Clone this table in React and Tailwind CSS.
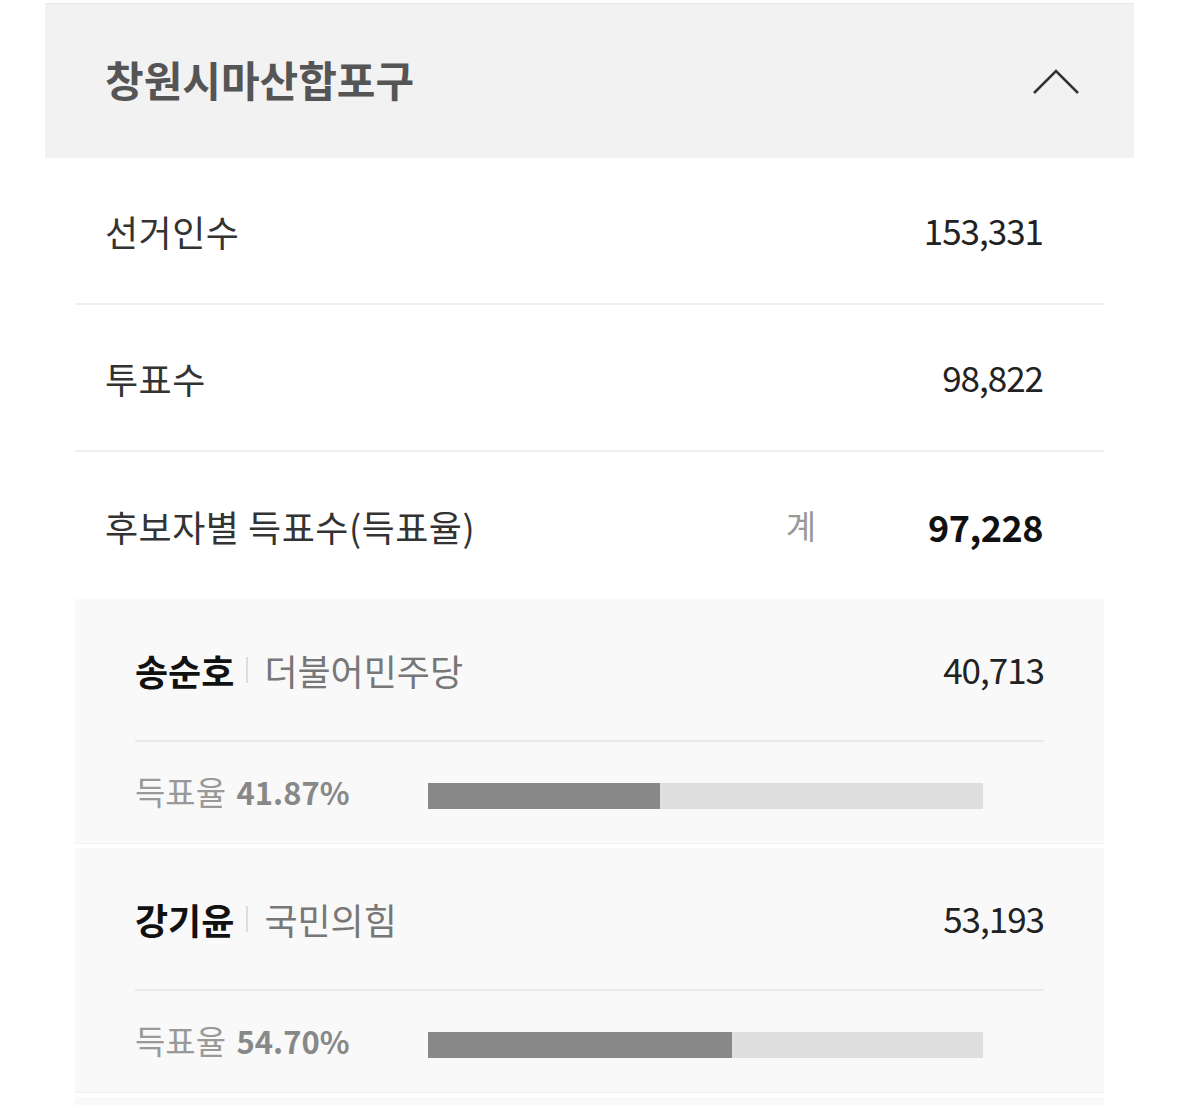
import React from 'react';

const font = { fontFamily: '"Noto Sans CJK KR", "Noto Sans", sans-serif' };

const candidates = [
    { name: '송순호', party: '더불어민주당', votes: '40,713', rate: 41.87 },
    { name: '강기윤', party: '국민의힘', votes: '53,193', rate: 54.7 },
];

const StatRow = ({ label, value }) => (
    <div className="flex items-center justify-between h-[147px] pl-[30px] pr-[61px] border-b-2 border-[#eeeeee]">
        <span className="text-[36px] tracking-[0.5px] text-[#333333]">{label}</span>
        <span className="text-[35px] tracking-[-1px] text-[#222222]">{value}</span>
    </div>
);

const CandidateCard = ({ candidate }) => (
    <div className="bg-[#f9f9f9] px-[60px] h-[245px] mb-[4px] border-b border-[#f1f1f1]">
        <div className="flex items-center justify-between h-[143px] border-b-2 border-[#eaeaea]">
            <div className="flex items-center">
                <span className="text-[36px] font-bold text-[#111111]">{candidate.name}</span>
                <span className="ml-[12px] mr-[16px] w-[2px] h-[26px] bg-[#dddddd]" />
                <span className="text-[36px] text-[#777777]">{candidate.party}</span>
            </div>
            <span className="text-[35px] tracking-[-1px] text-[#222222]">{candidate.votes}</span>
        </div>
        <div className="flex items-center h-[100px] pt-[8px]">
            <div className="w-[293px] mb-[8px] text-[33px] text-[#999999]">
                득표율 <span className="ml-[3px] text-[31px] font-bold text-[#888888]">{candidate.rate.toFixed(2)}%</span>
            </div>
            <div className="w-[555px] h-[26px] bg-[#dfdfdf]">
                <div className="h-full bg-[#888888]" style={{ width: `${candidate.rate}%` }} />
            </div>
        </div>
    </div>
);

export default function App() {
    return (
        <div className="bg-white min-h-screen pt-[3px] px-[45px]" style={font}>
            {/* District header */}
            <div className="flex items-center justify-between h-[155px] bg-[#f2f2f2] border-t border-[#e8e8e8] pl-[60px] pr-[54px] pb-[6px]">
                <h1 className="text-[42px] font-bold text-[#555555]">창원시마산합포구</h1>
                <svg width="48" height="28" viewBox="0 0 48 28" fill="none" className="mt-[8px]">
                    <path d="M2 25 L24 3 L46 25" stroke="#333333" strokeWidth="2.5" />
                </svg>
            </div>

            <div className="mx-[30px]">
                <StatRow label="선거인수" value="153,331" />
                <StatRow label="투표수" value="98,822" />
                <div className="flex items-center justify-between h-[147px] pl-[30px] pr-[61px]">
                    <span className="text-[36px] tracking-[0.5px] text-[#333333]">후보자별 득표수(득표율)</span>
                    <div className="flex items-center">
                        <span className="text-[33px] text-[#999999] mr-[112px]">계</span>
                        <span className="text-[36px] tracking-[-0.5px] font-bold text-[#111111]">97,228</span>
                    </div>
                </div>

                {candidates.map((c, i) => (
                    <CandidateCard key={i} candidate={c} />
                ))}
                <div className="bg-[#f9f9f9] h-[245px]" />
            </div>
        </div>
    );
}
